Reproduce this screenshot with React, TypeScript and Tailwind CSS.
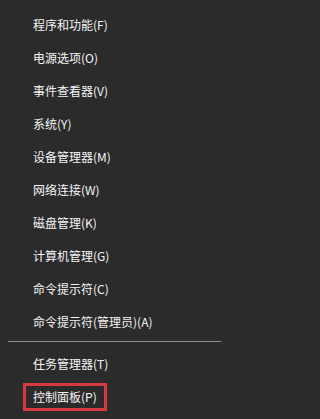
import React from "react";

const top = [
  "程序和功能(F)",
  "电源选项(O)",
  "事件查看器(V)",
  "系统(Y)",
  "设备管理器(M)",
  "网络连接(W)",
  "磁盘管理(K)",
  "计算机管理(G)",
  "命令提示符(C)",
  "命令提示符(管理员)(A)",
];

export default function App() {
  return (
    <div className="w-full min-h-screen bg-[#2b2b2b]">
      <div
        className="w-[228px] h-[419px] bg-[#2b2b2b] text-[#f5f5f5] text-[12px] leading-none pt-[8px] overflow-hidden"
        style={{ fontFamily: '"Noto Sans CJK SC", "Noto Sans", sans-serif' }}
      >
        {top.map((t) => (
          <div key={t} className="h-[33px] flex items-center pl-[33px]">
            {t}
          </div>
        ))}
        <div className="mt-[3px] mb-[5px] ml-[8px] w-[213px] h-px bg-[#8c8c8c]" />
        <div className="h-[33px] flex items-center pl-[33px]">任务管理器(T)</div>
        <div className="h-[33px] flex items-center pl-[23px]">
          <span className="h-[28px] w-[84px] border-[3px] border-[#d5393f] flex items-center pl-[7px]">
            控制面板(P)
          </span>
        </div>
      </div>
    </div>
  );
}
